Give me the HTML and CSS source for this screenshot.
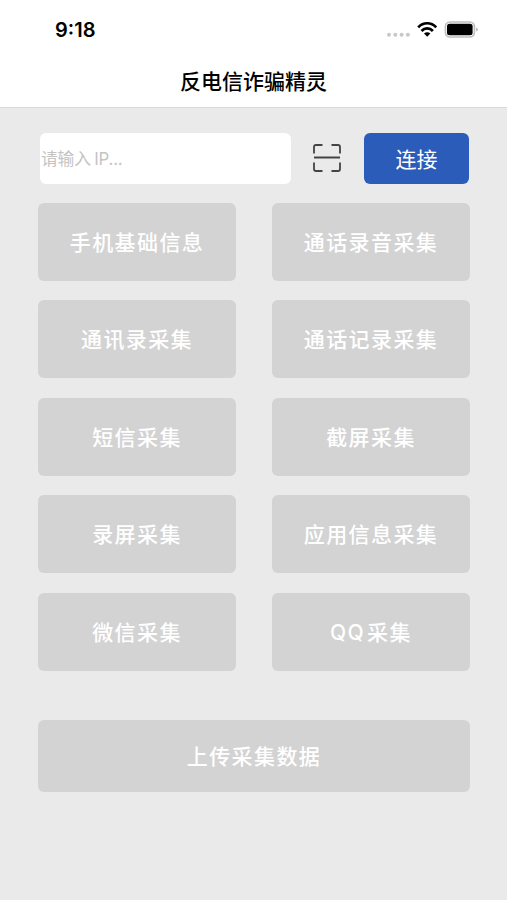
FILE: index.html
```html
<!DOCTYPE html>
<html lang="zh-CN">
    <head>
        <title>反电信诈骗精灵</title>
        <meta charset="UTF-8">
        <meta name="viewport" content="width=device-width, initial-scale=1.0">
        <link rel="stylesheet" href="styles.css">
    </head>
    <body>
        <header class="header">
            <div class="status-bar">
                <span class="time">9:18</span>
                <svg class="status-icons" width="92" height="20" viewBox="0 0 92 20">
                    <!-- signal -->
                    <g fill="#c8c8c8">
                        <circle cx="2" cy="14.7" r="2"/>
                        <circle cx="8.3" cy="14.7" r="2"/>
                        <circle cx="14.6" cy="14.7" r="2"/>
                        <circle cx="20.9" cy="14.7" r="2"/>
                    </g>
                    <!-- wifi -->
                    <g fill="none" stroke="#000" stroke-width="2.7">
                        <path d="M31.2 7.3C36.2 1.9 44.2 1.9 49.2 7.3"/>
                        <path d="M34.5 11C37.7 7.600 42.700 7.600 45.900 11"/>
                    </g>
                    <path d="M37 13.600C38.800 11.900 41.600 11.900 43.400 13.600L40.200 16.800Z"/>
                    <!-- battery -->
                    <rect x="58.400" y="2" width="29" height="15" rx="4.500" fill="#fff" stroke="#bdbdbd" stroke-width="1.600"/>
                    <rect x="60" y="3.700" width="25.600" height="11.600" rx="2.500"/>
                    <path d="M89 7.500Q91 8 91 9.500Q91 11 89 11.500Z" fill="#bdbdbd"/>
                </svg>
            </div>
            <h1 class="title">反电信诈骗精灵</h1>
        </header>

        <main class="content">
            <form class="connect" action="javascript:void(0);">
                <input type="text" class="ip" name="ip" placeholder="请输入 IP...">
                <svg class="scan" width="28" height="28" viewBox="0 0 28 28" fill="none" stroke="#444" stroke-width="1.8">
                    <path d="M1 9.500V3Q1 1 3 1H9.500M18.500 1H25Q27 1 27 3V9.500M27 18.500V25Q27 27 25 27H18.500M9.500 27H3Q1 27 1 25V18.500M1 13.500H27"/>
                </svg>
                <button type="submit" class="btn-connect">连接</button>
            </form>

            <div class="grid">
                <button type="button" class="btn">手机基础信息</button>
                <button type="button" class="btn">通话录音采集</button>
                <button type="button" class="btn">通讯录采集</button>
                <button type="button" class="btn">通话记录采集</button>
                <button type="button" class="btn">短信采集</button>
                <button type="button" class="btn">截屏采集</button>
                <button type="button" class="btn">录屏采集</button>
                <button type="button" class="btn">应用信息采集</button>
                <button type="button" class="btn">微信采集</button>
                <button type="button" class="btn btn-qq">QQ 采集</button>
            </div>

            <button type="button" class="btn btn-upload">上传采集数据</button>
        </main>
    </body>
</html>
```
FILE: styles.css
```css
*{
    box-sizing: border-box;
}
body{
    margin: 0;
    min-height: 900px;
    background: #eaeaea;
    font-family: Inter, "Noto Sans CJK SC", sans-serif;
}
button,
input{
    border: 0;
    padding: 0;
    font-family: inherit;
}

.header{
    height: 108px;
    background: #fff;
    border-bottom: 1px solid #d9d9d9;
}
.status-bar{
    display: flex;
    justify-content: space-between;
    height: 60px;
    padding: 20px 28px 0 55px;
}
.time{
    font-size: 20px;
    line-height: 20px;
    font-weight: 600;
}
.title{
    margin: 0;
    font-size: 21px;
    line-height: 43px;
    font-weight: 500;
    text-align: center;
}

.content{
    padding: 25px 37px 0 38px;
}
.connect{
    display: flex;
    align-items: center;
    height: 51px;
    margin: 0 1px 19px 2px;
}
.ip{
    width: 251px;
    height: 51px;
    border-radius: 6px;
    padding-left: 1px;
    background: #fff;
    font-size: 16.8px;
    letter-spacing: -0.2px;
    word-spacing: -1px;
}
.ip::placeholder{
    color: #c4c4c4;
}
.scan{
    margin: 0 23px 1px 22px;
}
.btn-connect{
    flex: 1;
    height: 51px;
    padding-bottom: 2px;
    border-radius: 6px;
    background: #2b5cba;
    color: #fff;
    font-size: 21px;
}

.grid{
    display: grid;
    grid-template-columns: 1fr 1fr;
    grid-auto-rows: 78px;
    gap: 19.4px 36px;
}
.btn{
    padding-bottom: 2px;
    border-radius: 6px;
    background: #d3d3d3;
    color: #fff;
    font-size: 21px;
    font-weight: 500;
    letter-spacing: 1.4px;
}
.btn-qq{
    word-spacing: -5px;
}
.btn-upload{
    display: block;
    width: 100%;
    height: 72px;
    margin-top: 49px;
}
```
